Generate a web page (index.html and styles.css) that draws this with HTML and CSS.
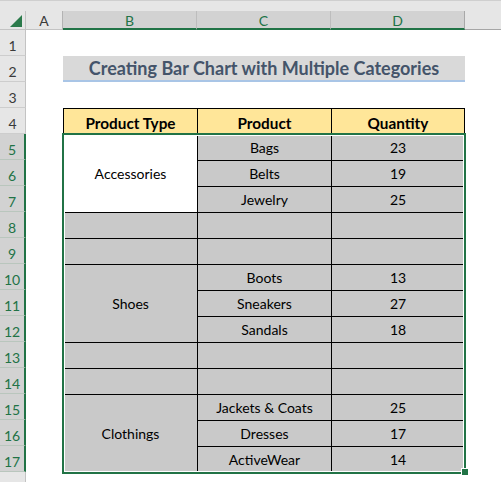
FILE: index.html
```html
<!DOCTYPE html>
<html>
<head>
<meta charset="utf-8">
<link rel="stylesheet" href="styles.css">
</head>
<body>
<div class="sheet">
  <div class="topbar"></div>
  <div class="corner"><svg class="tri" width="12" height="12" viewBox="0 0 12 12"><polygon points="12,0 12,12 0,12"/></svg></div>
  <div class="colhead colA">A</div>
  <div class="colhead sel">B</div>
  <div class="colhead sel">C</div>
  <div class="colhead sel lastsel">D</div>
  <div class="colhead rest"></div>

  <div class="rowheads">
    <div class="rh">1</div>
    <div class="rh">2</div>
    <div class="rh">3</div>
    <div class="rh">4</div>
    <div class="rh sel">5</div>
    <div class="rh sel">6</div>
    <div class="rh sel">7</div>
    <div class="rh sel">8</div>
    <div class="rh sel">9</div>
    <div class="rh sel">10</div>
    <div class="rh sel">11</div>
    <div class="rh sel">12</div>
    <div class="rh sel">13</div>
    <div class="rh sel">14</div>
    <div class="rh sel">15</div>
    <div class="rh sel">16</div>
    <div class="rh sel">17</div>
    <div class="rh rest"></div>
  </div>

  <div class="title">Creating Bar Chart with Multiple Categories</div>

  <div class="table">
    <div class="cell head">Product Type</div>
    <div class="cell head">Product</div>
    <div class="cell head">Quantity</div>

    <div class="cell merged white">Accessories</div>
    <div class="cell">Bags</div><div class="cell">23</div>
    <div class="cell">Belts</div><div class="cell">19</div>
    <div class="cell">Jewelry</div><div class="cell">25</div>

    <div class="cell"></div><div class="cell"></div><div class="cell"></div>
    <div class="cell"></div><div class="cell"></div><div class="cell"></div>

    <div class="cell merged">Shoes</div>
    <div class="cell">Boots</div><div class="cell">13</div>
    <div class="cell">Sneakers</div><div class="cell">27</div>
    <div class="cell">Sandals</div><div class="cell">18</div>

    <div class="cell"></div><div class="cell"></div><div class="cell"></div>
    <div class="cell"></div><div class="cell"></div><div class="cell"></div>

    <div class="cell merged">Clothings</div>
    <div class="cell">Jackets &amp; Coats</div><div class="cell">25</div>
    <div class="cell">Dresses</div><div class="cell">17</div>
    <div class="cell">ActiveWear</div><div class="cell">14</div>

    <div class="selection"><div class="handle"></div></div>
  </div>
</div>
</body>
</html>
```

FILE: styles.css
```css
* { box-sizing: border-box; }
html, body { margin: 0; padding: 0; background: #fff; }
body { width: 501px; height: 482px; overflow: hidden; font-family: Lato, "Liberation Sans", sans-serif; }

.sheet {
  display: grid;
  grid-template-columns: 26px 37px 134px 134px 134px 1fr;
  grid-template-rows: 11px 19px repeat(17, 26px) 1fr;
  width: 501px;
  height: 482px;
}

.topbar {
  grid-column: 1 / -1;
  grid-row: 1;
  background: #e6e6e6;
  border-top: 1px solid #cfcfcf;
}

.corner {
  grid-column: 1;
  grid-row: 2;
  background: #e6e6e6;
  border-right: 1px solid #c3c3c3;
  border-bottom: 1px solid #c3c3c3;
  display: flex;
  align-items: flex-end;
  justify-content: flex-end;
  padding: 0 3px 2px 0;
}
.tri { display: block; fill: #2b7a4b; }

.colhead {
  grid-row: 2;
  background: #e6e6e6;
  font-size: 14px;
  line-height: 19px;
  text-align: center;
  color: #3a3a3a;
  border-bottom: 1px solid #c3c3c3;
  border-right: 1px solid #c9c9c9;
}
.colhead.colA { border-right-color: #b3b3b3; }
.colhead.sel {
  background: #d2d2d2;
  color: #217346;
  border-bottom: 2px solid #217346;
  border-right-color: #bdbdbd;
}
.colhead.lastsel { border-right-color: #a8a8a8; }
.colhead.rest { border-right: none; border-bottom: 1px solid #a6a6a6; }

.rowheads {
  grid-column: 1;
  grid-row: 3 / -1;
  display: flex;
  flex-direction: column;
}
.rh {
  height: 26px;
  flex: none;
  background: #e6e6e6;
  border-right: 1px solid #c3c3c3;
  border-bottom: 1px solid #cdcdcd;
  color: #3a3a3a;
  font-size: 14px;
  line-height: 1;
  display: flex;
  align-items: flex-end;
  justify-content: center;
  padding-bottom: 2px;
}
.rh.sel {
  background: #d2d2d2;
  color: #217346;
  border-right: 2px solid #217346;
  border-bottom-color: #b9c6bd;
}
.rh.rest { flex: 1; height: auto; border-bottom: none; }

.title {
  grid-column: 3 / 6;
  grid-row: 4;
  background: #d9d9d9;
  border-bottom: 2px solid #a9c5e6;
  color: #44546a;
  font-weight: bold;
  font-size: 18px;
  text-align: center;
  line-height: 25px;
}

.table {
  grid-column: 3 / 6;
  grid-row: 6 / 20;
  position: relative;
  align-self: start;
  display: grid;
  grid-template-columns: 133px 133px 132px;
  grid-auto-rows: 25px;
  gap: 1px;
  padding: 1px;
  background: #000;
}
.cell {
  background: #c9c9c9;
  color: #000;
  font-size: 14px;
  display: flex;
  align-items: center;
  justify-content: center;
}
.cell.head { background: #ffe699; font-weight: bold; font-size: 15.3px; padding-top: 2px; }
.cell.merged { grid-row: span 3; }
.cell.white { background: #fff; }

.selection {
  position: absolute;
  left: -1px;
  top: 25px;
  width: 404px;
  height: 341px;
  border: 2px solid #217346;
  box-shadow: inset 0 0 0 1px #fff;
}
.handle {
  position: absolute;
  right: -4px;
  bottom: -3px;
  width: 6px;
  height: 6px;
  background: #217346;
  box-shadow: 0 0 0 1px #fff;
}
```
